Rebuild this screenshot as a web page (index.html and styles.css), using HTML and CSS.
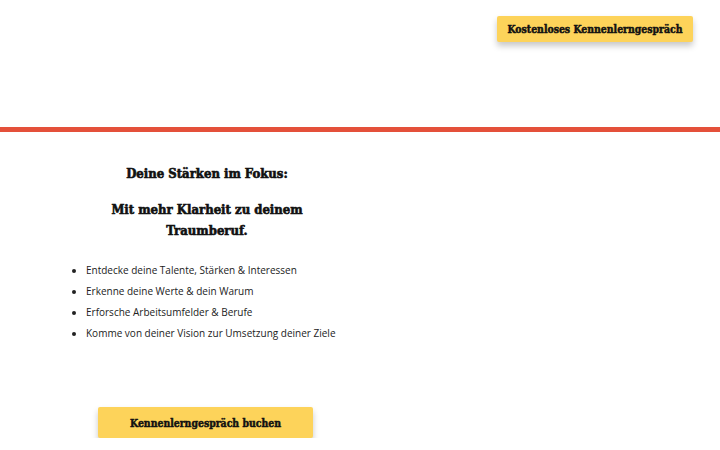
FILE: index.html
```html
<!DOCTYPE html>
<html lang="de">
<head>
  <meta charset="UTF-8">
  <meta name="viewport" content="width=device-width, initial-scale=1.0">
  <title>Deine Stärken im Fokus</title>
  <link rel="stylesheet" href="styles.css">
</head>
<body>
  <header class="top">
    <a class="btn btn-top" href="#">Kostenloses Kennenlerngespräch</a>
  </header>
  <div class="divider"></div>
  <main class="intro">
    <div class="intro-col">
      <h2 class="intro-title">Deine Stärken im Fokus:</h2>
      <h2 class="intro-sub">Mit mehr Klarheit zu deinem<br>Traumberuf.</h2>
      <ul class="points">
        <li>Entdecke deine Talente, Stärken &amp; Interessen</li>
        <li>Erkenne deine Werte &amp; dein Warum</li>
        <li>Erforsche Arbeitsumfelder &amp; Berufe</li>
        <li>Komme von deiner Vision zur Umsetzung deiner Ziele</li>
      </ul>
      <a class="btn btn-book" href="#">Kennenlerngespräch buchen</a>
    </div>
  </main>
</body>
</html>
```

FILE: styles.css
```css
body {
  margin: 0;
  padding: 0;
  background: #fff;
  color: #222;
  font-family: 'Open Sans', sans-serif;
}
.top {
  height: 127px;
  display: flex;
  justify-content: flex-end;
  align-items: flex-start;
  padding: 16px 27px 0 0;
  box-sizing: border-box;
}
.btn {
  display: flex;
  align-items: center;
  justify-content: center;
  background: #fdd35a;
  color: #111;
  text-decoration: none;
  font-family: 'DejaVu Serif Condensed', 'DejaVu Serif', serif;
  font-weight: bold;
  font-size: 10.4px;
  -webkit-text-stroke: 0.45px #111;
  border-radius: 2px;
  box-shadow: 0 4px 6px rgba(0,0,0,0.22);
}
.btn-top {
  width: 196px;
  height: 26px;
}
.divider {
  height: 5px;
  background: #e4503a;
}
.intro {
  padding-top: 31px;
}
.intro-col {
  width: 414px;
}
.intro-title, .intro-sub {
  margin: 0;
  text-align: center;
  font-family: 'DejaVu Serif Condensed', 'DejaVu Serif', serif;
  font-weight: bold;
  font-size: 13px;
  -webkit-text-stroke: 0.6px #111;
  color: #111;
  line-height: 21px;
}
.intro-sub {
  margin-top: 15px;
}
.points {
  margin: 19px 0 0;
  padding-left: 86px;
  font-size: 10px;
  line-height: 21px;
}
.btn-book {
  width: 215px;
  height: 31px;
  margin: 63px 0 0 98px;
}
```
